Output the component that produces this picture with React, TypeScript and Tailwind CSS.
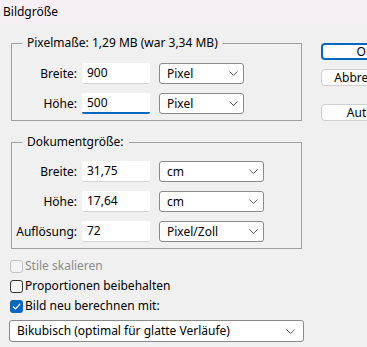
import React from "react";

function Chevron() {
  return (
    <svg width="9" height="5" viewBox="0 0 9 5" className="shrink-0">
      <path d="M0.5 0.5 L4.5 4.5 L8.5 0.5" fill="none" stroke="#606060" strokeWidth="1" />
    </svg>
  );
}

function Select({ value, w }: { value: string; w: string }) {
  return (
    <div
      className={`${w} h-[21px] bg-white border border-[#8a8a8a] rounded-[3px] flex items-center justify-between pl-[7px] pr-[5px]`}
    >
      <span className="leading-[16px]">{value}</span>
      <Chevron />
    </div>
  );
}

function Row({
  label,
  value,
  unit,
  sw,
  focused,
}: {
  label: string;
  value: string;
  unit: string;
  sw: string;
  focused?: boolean;
}) {
  return (
    <div className="flex items-center h-[21px]">
      <div className="w-[65px] text-right leading-[16px]">{label}</div>
      <div
        className={`ml-[5px] w-[68px] h-[21px] bg-white flex items-center pl-[5px] rounded-[2px] ${
          focused ? "border-b-2 border-[#0067c0]" : "border-b border-[#d4d4d4]"
        }`}
      >
        <span className="leading-[16px]">{value}</span>
      </div>
      <div className="ml-[9px]">
        <Select value={unit} w={sw} />
      </div>
    </div>
  );
}

function Check({
  label,
  state,
}: {
  label: string;
  state: "disabled" | "off" | "on";
}) {
  return (
    <div className="flex items-center h-[20px] ml-[10px]">
      {state === "on" ? (
        <div className="w-[13px] h-[13px] rounded-[3px] bg-[#0067c0] flex items-center justify-center">
          <svg width="9" height="7" viewBox="0 0 9 7">
            <path d="M1 3.5 L3.5 6 L8 1" fill="none" stroke="#ffffff" strokeWidth="1.2" />
          </svg>
        </div>
      ) : (
        <div
          className={`w-[13px] h-[13px] rounded-[3px] border ${
            state === "disabled" ? "border-[#c4c4c4] bg-[#f3f3f3]" : "border-[#333333] bg-[#f7f7f7]"
          }`}
        />
      )}
      <span
        className={`ml-[2px] leading-[16px] ${state === "disabled" ? "text-[#8c8c8c]" : "text-black"}`}
      >
        {label}
      </span>
    </div>
  );
}

export default function App() {
  return (
    <div className="w-[367px] h-[347px] overflow-hidden bg-[#f0f0f0] text-[12px] text-black font-['Noto_Sans',sans-serif]">
      <div className="h-[24px] bg-[#f6eff5] flex items-center pl-[3px]">
        <span className="leading-[16px]">Bildgröße</span>
      </div>
      <div className="flex">
        <div className="w-[321px] shrink-0">
          <fieldset className="ml-[11px] mt-[11px] w-[291px] border border-[#a0a0a0] pb-[6px]">
            <legend className="ml-[10px] px-[5px] leading-[16px]">
              Pixelmaße: 1,29 MB (war 3,34 MB)
            </legend>
            <div className="pt-[12px] flex flex-col gap-[9px]">
              <Row label="Breite:" value="900" unit="Pixel" sw="w-[85px]" />
              <Row label="Höhe:" value="500" unit="Pixel" sw="w-[85px]" focused />
            </div>
          </fieldset>
          <fieldset className="ml-[11px] mt-[13px] w-[291px] border border-[#a0a0a0] pb-[6px]">
            <legend className="ml-[10px] px-[5px] leading-[16px]">Dokumentgröße:</legend>
            <div className="pt-[11px] flex flex-col gap-[9px]">
              <Row label="Breite:" value="31,75" unit="cm" sw="w-[105px]" />
              <Row label="Höhe:" value="17,64" unit="cm" sw="w-[105px]" />
              <Row label="Auflösung:" value="72" unit="Pixel/Zoll" sw="w-[105px]" />
            </div>
          </fieldset>
          <div className="mt-[7px] flex flex-col">
            <Check label="Stile skalieren" state="disabled" />
            <Check label="Proportionen beibehalten" state="off" />
            <Check label="Bild neu berechnen mit:" state="on" />
          </div>
          <div className="ml-[9px] mt-[4px] w-[295px] h-[22px] bg-white border border-[#8a8a8a] rounded-[3px] flex items-center justify-between pl-[7px] pr-[8px]">
            <span className="leading-[16px]">Bikubisch (optimal für glatte Verläufe)</span>
            <Chevron />
          </div>
        </div>
        <div className="flex flex-col pt-[19px] shrink-0">
          <div className="w-[88px] h-[17px] rounded-[4px] border-2 border-[#0067c0] bg-[#fdfdfd] flex items-center justify-center">
            <span className="leading-[14px]">OK</span>
          </div>
          <div className="mt-[9px] w-[88px] h-[17px] rounded-[4px] border border-[#d0d0d0] bg-[#fdfdfd] flex items-center justify-center">
            <span className="leading-[14px]">Abbrechen</span>
          </div>
          <div className="mt-[18px] w-[88px] h-[17px] rounded-[4px] border border-[#d0d0d0] bg-[#fdfdfd] flex items-center justify-center">
            <span className="leading-[14px]">Auto...</span>
          </div>
        </div>
      </div>
    </div>
  );
}
